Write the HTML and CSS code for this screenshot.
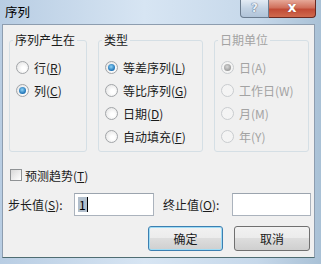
FILE: index.html
```html
<!DOCTYPE html>
<html lang="zh-CN">
<head>
    <meta charset="UTF-8">
    <meta name="viewport" content="width=device-width, initial-scale=1.0">
    <title>序列</title>
    <link rel="stylesheet" href="styles.css">
</head>
<body>
    <div class="window">
        <div class="titlebar">
            <span class="title">序列</span>
            <div class="caption-buttons">
                <span class="help-button">?</span>
                <span class="close-button">x</span>
            </div>
        </div>
        <div class="client">
            <div class="groups">
                <fieldset class="group group-rowcol">
                    <legend>序列产生在</legend>
                    <label class="option"><span class="radio"></span>行(<u>R</u>)</label>
                    <label class="option"><span class="radio checked"></span>列(<u>C</u>)</label>
                </fieldset>
                <fieldset class="group group-type">
                    <legend>类型</legend>
                    <label class="option"><span class="radio checked"></span>等差序列(<u>L</u>)</label>
                    <label class="option"><span class="radio"></span>等比序列(<u>G</u>)</label>
                    <label class="option"><span class="radio"></span>日期(<u>D</u>)</label>
                    <label class="option"><span class="radio"></span>自动填充(<u>F</u>)</label>
                </fieldset>
                <fieldset class="group group-unit disabled">
                    <legend>日期单位</legend>
                    <label class="option"><span class="radio checked"></span>日(A)</label>
                    <label class="option"><span class="radio"></span>工作日(W)</label>
                    <label class="option"><span class="radio"></span>月(M)</label>
                    <label class="option"><span class="radio"></span>年(Y)</label>
                </fieldset>
            </div>
            <label class="trend"><span class="checkbox"></span>预测趋势(<u>T</u>)</label>
            <div class="values">
                <span class="value-label">步长值(<u>S</u>):</span>
                <div class="textbox step"><span class="selected">1</span><span class="caret"></span></div>
                <span class="value-label stop-label">终止值(<u>O</u>):</span>
                <div class="textbox stop"></div>
            </div>
            <div class="actions">
                <button class="btn btn-default">确定</button>
                <button class="btn">取消</button>
            </div>
        </div>
    </div>
</body>
</html>
```

FILE: styles.css
```css
body {
    margin: 0;
    padding: 0;
    width: 321px;
    height: 264px;
    overflow: hidden;
    font-family: "Noto Sans CJK SC", "Noto Sans", sans-serif;
    font-size: 12px;
    color: #1b1b1b;
}

.window {
    height: 264px;
    display: flex;
    flex-direction: column;
    background: linear-gradient(to right, #b8cde3, #d7e5f3 45%, #c6d8ea 80%, #a9c1d6);
}

.titlebar {
    height: 24px;
    display: flex;
    align-items: flex-start;
    padding-left: 5px;
}

.title {
    line-height: 24px;
    font-size: 12.5px;
    color: #000;
}

.caption-buttons {
    margin-left: auto;
    margin-right: 5px;
    display: flex;
}

.help-button {
    width: 27px;
    height: 17px;
    border: 1px solid #6b7c8f;
    border-top: none;
    border-radius: 0 0 0 4px;
    background: linear-gradient(#e3ebf4, #c2d2e3 50%, #b0c3d8);
    color: #e9eef5;
    text-shadow: 0 0 1px #4f6480, 0 0 1px #4f6480;
    font: bold 12px "DejaVu Sans", sans-serif;
    line-height: 16px;
    text-align: center;
}

.close-button {
    width: 46px;
    height: 17px;
    border: 1px solid #6a2a22;
    border-top: none;
    border-left: none;
    border-radius: 0 0 4px 0;
    background: linear-gradient(#e6a898, #d0705c 45%, #c14b36 55%, #d06a4e);
    color: #fff;
    text-shadow: 0 0 1px #6a2a22;
    font: bold 14px "DejaVu Sans", sans-serif;
    line-height: 15px;
    text-align: center;
}

.client {
    flex: 1;
    margin: 0 6px 6px 2px;
    background: #f0f0f0;
    border: 1px solid #8d9daf;
    border-bottom-color: #4f6d72;
    padding-top: 8px;
}

.groups {
    display: flex;
    gap: 11px;
    padding-left: 6px;
}

.group {
    margin: 0;
    padding: 9px 0 3px 0;
    border: 1px solid #d5dfe5;
    border-radius: 3px;
    min-width: 0;
    box-sizing: border-box;
}

.group legend {
    margin-left: 3px;
    padding: 0 2px;
    line-height: 14px;
}

.group-rowcol {
    width: 78px;
}

.group-type {
    width: 105px;
}

.group-unit {
    width: 95px;
}

.option {
    display: flex;
    align-items: center;
    height: 23px;
    padding-left: 6px;
    white-space: nowrap;
}

.radio {
    width: 11px;
    height: 11px;
    border: 1px solid #a2a5a8;
    border-radius: 50%;
    margin-right: 5px;
    background: radial-gradient(circle at 60% 60%, #ffffff 20%, #e2e2e2 90%);
    position: relative;
    flex-shrink: 0;
}

.radio.checked::after {
    content: "";
    position: absolute;
    left: 2px;
    top: 2px;
    width: 7px;
    height: 7px;
    border-radius: 50%;
    background: radial-gradient(circle at 45% 40%, #8fd4f8, #1b6fb3 70%);
}

.disabled {
    color: #a3a3a3;
}

.disabled .radio {
    border-color: #c9cccf;
    background: #f4f4f4;
}

.disabled .radio.checked::after {
    background: radial-gradient(circle at 45% 40%, #d8d8d8, #9b9b9b 70%);
}

.trend {
    display: flex;
    align-items: center;
    height: 16px;
    margin-top: 15px;
    padding-left: 7px;
}

.checkbox {
    width: 10px;
    height: 10px;
    border: 1px solid #8f9294;
    margin-right: 3px;
    background: linear-gradient(135deg, #d8d8d8, #ffffff);
}

.values {
    display: flex;
    align-items: center;
    margin-top: 10px;
    padding-left: 5px;
}

.value-label {
    width: 66px;
    white-space: nowrap;
}

.stop-label {
    margin-left: 9px;
    width: 69px;
}

.textbox {
    height: 21px;
    border: 1px solid #abb3bd;
    border-top-color: #9ba4ae;
    background: #fff;
    display: flex;
    align-items: center;
    padding-left: 3px;
    box-sizing: content-box;
}

.step {
    width: 75px;
}

.stop {
    width: 74px;
}

.selected {
    background: #b2bfcc;
    padding: 0 1px;
    line-height: 15px;
    color: #000;
}

.caret {
    width: 1px;
    height: 15px;
    background: #000;
}

.actions {
    display: flex;
    justify-content: flex-end;
    gap: 11px;
    margin-top: 10px;
    padding-right: 4px;
}

.btn {
    width: 76px;
    height: 25px;
    border: 1px solid #707070;
    border-radius: 3px;
    background: linear-gradient(#f2f2f2, #ebebeb 50%, #dddddd 50%, #cfcfcf);
    font-family: "Noto Sans CJK SC", "Noto Sans", sans-serif;
    font-size: 12px;
    color: #1b1b1b;
    padding: 0;
}

.btn-default {
    width: 75px;
    border-color: #3c7fb1;
    box-shadow: inset 0 0 0 1px #9fdcf5;
}
```
